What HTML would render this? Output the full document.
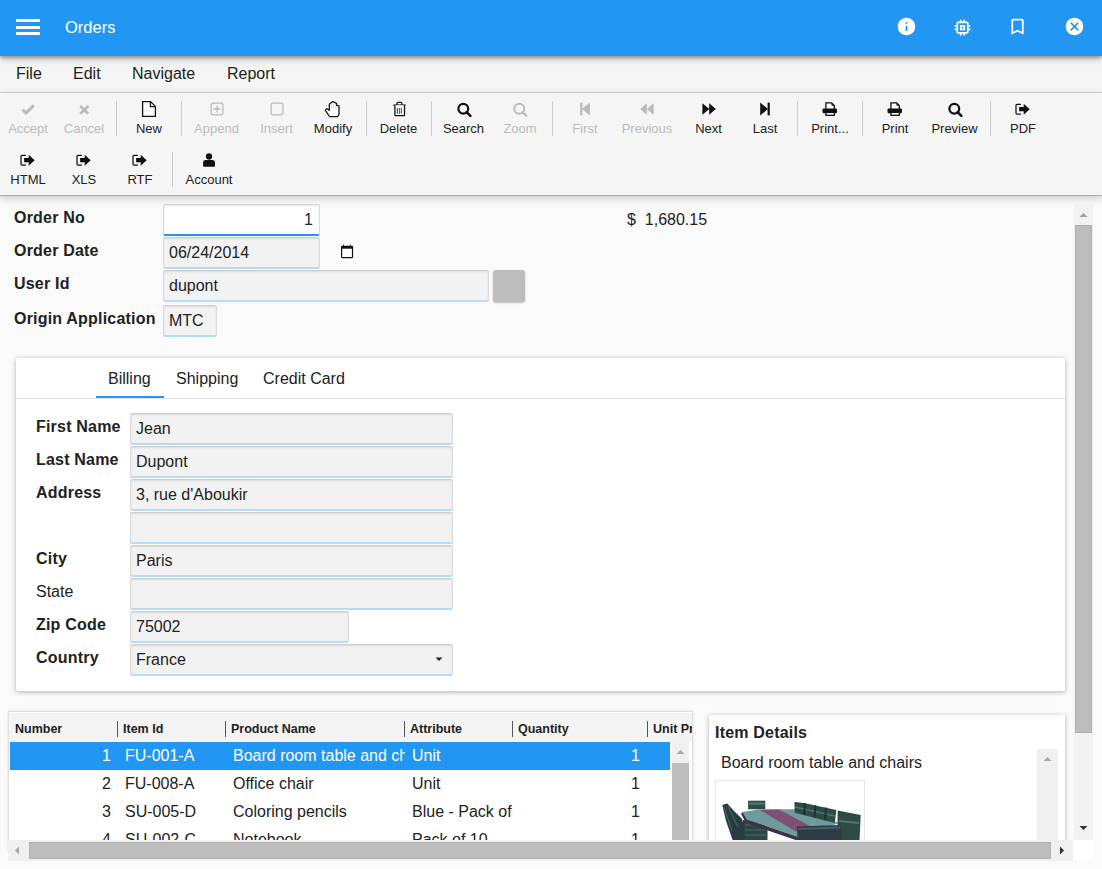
<!DOCTYPE html>
<html><head><meta charset="utf-8">
<style>
*{box-sizing:border-box;margin:0;padding:0}
html,body{width:1102px;height:869px;overflow:hidden;background:#fafafa;font-family:"Liberation Sans",sans-serif;color:#222;font-size:16px}
.abs{position:absolute}
#hdr{position:absolute;left:0;top:0;width:1102px;height:56px;background:#2196f3;z-index:5;box-shadow:0 2px 3px rgba(0,0,0,.28),0 3px 8px rgba(0,0,0,.2)}
#hdr .ttl{position:absolute;left:65px;top:17.3px;font-size:16.5px;color:#fff;line-height:20px}
#menu{position:absolute;left:0;top:56px;width:1102px;height:37px;background:#f5f5f5;border-bottom:1px solid #cfcfcf}
#menu span{position:absolute;top:9px;line-height:18px;font-size:16px;color:#222}
#tb{position:absolute;left:0;top:93px;width:1102px;height:102px;background:#f5f5f5;z-index:4;box-shadow:0 1px 1px rgba(0,0,0,.2),0 3px 9px rgba(0,0,0,.2)}
.btn{position:absolute;width:80px;margin-left:-40px;text-align:center;font-size:13px;line-height:15px;color:#222}
.btn.dis{color:#bcbcbc}
.btn svg{position:absolute;left:50%;margin-left:-9px;width:18px;height:18px}
.btn .lb{position:absolute;left:0;width:80px;white-space:nowrap}
.sep{position:absolute;width:1px;background:#cdcdcd}
.lbl{position:absolute;font-weight:bold;font-size:16px;line-height:18px;color:#222;white-space:nowrap;letter-spacing:0.2px}
.lbln{position:absolute;font-size:16px;line-height:18px;color:#222;white-space:nowrap}
.inp{position:absolute;height:32px;background:#f2f2f2;border:1px solid #dadada;border-top-color:#cdcdcd;box-shadow:inset 0 1px 2px rgba(0,0,0,.10);border-bottom:2px solid #b6dcfa;border-radius:2px;font-size:16px;line-height:18px;padding:6px 0 0 5px;color:#222;white-space:nowrap;overflow:hidden}
.th{position:absolute;top:722px;font-weight:bold;font-size:12.5px;line-height:15px;color:#222;white-space:nowrap}
.row{position:absolute;left:0;width:660px;height:28px;font-size:16px;color:#222}
.row span{position:absolute;top:5px;line-height:18px;white-space:nowrap}
</style></head><body>

<div id="hdr">
  <div class="abs" style="left:16px;top:19px;width:24px;height:3px;background:#fff"></div>
  <div class="abs" style="left:16px;top:25.5px;width:24px;height:3px;background:#fff"></div>
  <div class="abs" style="left:16px;top:32px;width:24px;height:3px;background:#fff"></div>
  <div class="ttl">Orders</div>
  <svg class="abs" style="left:895.5px;top:16.3px" width="21" height="21" viewBox="0 0 24 24"><path fill="#fff" d="M12 2C6.48 2 2 6.48 2 12s4.48 10 10 10 10-4.48 10-10S17.52 2 12 2zm1 15h-2v-6h2v6zm0-8h-2V7h2v2z"/></svg>
  <svg class="abs" style="left:951.5px;top:16.5px" width="21" height="21" viewBox="0 0 24 24"><path fill="#fff" d="M15 9H9v6h6V9zm-2 4h-2v-2h2v2zm8-2V9h-2V7c0-1.1-.9-2-2-2h-2V3h-2v2h-2V3H9v2H7c-1.1 0-2 .9-2 2v2H3v2h2v2H3v2h2v2c0 1.1.9 2 2 2h2v2h2v-2h2v2h2v-2h2c1.1 0 2-.9 2-2v-2h2v-2h-2v-2h2zm-4 6H7V7h10v10z"/></svg>
  <svg class="abs" style="left:1007.4px;top:16.4px" width="21" height="21" viewBox="0 0 24 24"><path fill="#fff" d="M17 3H7c-1.1 0-1.99.9-1.99 2L5 21l7-3 7 3V5c0-1.1-.9-2-2-2zm0 15l-5-2.18L7 18V5h10v13z"/></svg>
  <svg class="abs" style="left:1063.5px;top:16.3px" width="21" height="21" viewBox="0 0 24 24"><path fill="#fff" d="M12 2C6.47 2 2 6.47 2 12s4.47 10 10 10 10-4.47 10-10S17.53 2 12 2zm5 13.59L15.59 17 12 13.41 8.41 17 7 15.59 10.59 12 7 8.41 8.41 7 12 10.59 15.59 7 17 8.41 13.41 12 17 15.59z"/></svg>

</div>

<div id="menu">
  <span style="left:16px">File</span>
  <span style="left:73px">Edit</span>
  <span style="left:132px">Navigate</span>
  <span style="left:227px">Report</span>
</div>

<div id="tb"></div>
<div id="tbi" style="position:absolute;left:0;top:0;z-index:6">
<div class="btn dis" style="left:28px;top:100px"><svg viewBox="0 0 18 18" style="top:0"><polyline points="3.6,9.6 7,13 14.8,5.4" fill="none" stroke="#bababa" stroke-width="2.9"/></svg><div class="lb" style="top:21px">Accept</div></div>
<div class="btn dis" style="left:84px;top:100px"><svg viewBox="0 0 18 18" style="top:0"><path d="M5.3,6.1 L13.3,13.7 M13.3,6.1 L5.3,13.7" stroke="#bababa" stroke-width="2.8"/></svg><div class="lb" style="top:21px">Cancel</div></div>
<div class="sep" style="left:116.0px;top:101px;height:35px"></div>
<div class="btn" style="left:149px;top:100px"><svg viewBox="0 0 18 18" style="top:0"><path d="M2.6,1.6 H10.6 L15.4,6.4 V16.4 H2.6 Z M10.4,1.6 V6.6 H15.4" fill="#fff" stroke="#111" stroke-width="1.3" stroke-linejoin="miter"/></svg><div class="lb" style="top:21px">New</div></div>
<div class="sep" style="left:181.0px;top:101px;height:35px"></div>
<div class="btn dis" style="left:216.5px;top:100px"><svg viewBox="0 0 18 18" style="top:0"><rect x="3.1" y="3.1" width="11.8" height="11.8" rx="1.8" fill="none" stroke="#bababa" stroke-width="1.3"/><path d="M9,5.5 V12.5 M5.5,9 H12.5" stroke="#bababa" stroke-width="1.3"/></svg><div class="lb" style="top:21px">Append</div></div>
<div class="btn dis" style="left:276.5px;top:100px"><svg viewBox="0 0 18 18" style="top:0"><rect x="3.1" y="3.1" width="11.8" height="11.8" rx="1.8" fill="none" stroke="#bababa" stroke-width="1.3"/></svg><div class="lb" style="top:21px">Insert</div></div>
<div class="btn" style="left:333px;top:100px"><svg viewBox="0 0 18 18" style="top:0"><path d="M5.3,10.3 V4.2 L8.8,1.6 L12.6,3.4 V5.3 L15,5.9 V14.3 L13.7,16.5 H5.5 L1.4,10.4 C1.7,9.1 2.7,8.5 3.6,8.9 L5.3,10.3 Z" fill="#fff" stroke="#111" stroke-width="1.25" stroke-linejoin="round"/><path d="M7.4,4.4 V8.9 M9.3,3.6 V8.9 M11.2,4.2 V8.9 M13.1,6.2 V8.9" stroke="#c8c8c8" stroke-width="0.7"/></svg><div class="lb" style="top:21px">Modify</div></div>
<div class="sep" style="left:366.0px;top:101px;height:35px"></div>
<div class="btn" style="left:398.5px;top:100px"><svg viewBox="0 0 18 18" style="top:0"><path d="M3.4,5.1 H15.6" stroke="#111" stroke-width="1.3"/><path d="M6.9,5 V3.6 C6.9,2.6 7.5,2.3 8.2,2.3 H10.6 C11.3,2.3 11.9,2.6 11.9,3.6 V5" fill="none" stroke="#111" stroke-width="1.2"/><path d="M4.9,5.2 V15 C4.9,15.4 5.2,15.6 5.6,15.6 H13.8 C14.2,15.6 14.5,15.4 14.5,15 V5.2" fill="#fff" stroke="#111" stroke-width="1.3"/><path d="M7.3,7.8 V13.8 M9.3,7.8 V13.8 M11.3,7.8 V13.8" stroke="#111" stroke-width="0.8"/></svg><div class="lb" style="top:21px">Delete</div></div>
<div class="sep" style="left:431.0px;top:101px;height:35px"></div>
<div class="btn" style="left:463.5px;top:100px"><svg viewBox="0 0 18 18" style="top:0"><circle cx="8.3" cy="8.7" r="4.9" fill="none" stroke="#111" stroke-width="2.2"/><path d="M11.6,12.1 L15.4,15.9" stroke="#111" stroke-width="2.6" stroke-linecap="round"/></svg><div class="lb" style="top:21px">Search</div></div>
<div class="btn dis" style="left:520px;top:100px"><svg viewBox="0 0 18 18" style="top:0"><circle cx="8.3" cy="8.7" r="5" fill="none" stroke="#bababa" stroke-width="1.9"/><path d="M11.7,12.2 L15.3,15.8" stroke="#bababa" stroke-width="2.3" stroke-linecap="round"/></svg><div class="lb" style="top:21px">Zoom</div></div>
<div class="sep" style="left:552.0px;top:101px;height:35px"></div>
<div class="btn dis" style="left:585px;top:100px"><svg viewBox="0 0 18 18" style="top:0"><rect x="4.2" y="2.6" width="2.2" height="12.8" fill="#bababa"/><polygon points="6,9 13.8,2.6 13.8,15.4" fill="#bababa"/></svg><div class="lb" style="top:21px">First</div></div>
<div class="btn dis" style="left:647px;top:100px"><svg viewBox="0 0 18 18" style="top:0"><polygon points="2.2,9 8.8,3.2 8.8,14.8" fill="#bababa"/><polygon points="8.6,9 15.6,3.2 15.6,14.8" fill="#bababa"/></svg><div class="lb" style="top:21px">Previous</div></div>
<div class="btn" style="left:708.5px;top:100px"><svg viewBox="0 0 18 18" style="top:0"><polygon points="15.8,9 9.2,3.2 9.2,14.8" fill="#111"/><polygon points="9.4,9 2.4,3.2 2.4,14.8" fill="#111"/></svg><div class="lb" style="top:21px">Next</div></div>
<div class="btn" style="left:765px;top:100px"><svg viewBox="0 0 18 18" style="top:0"><rect x="11.6" y="2.6" width="2.2" height="12.8" fill="#111"/><polygon points="12,9 4.2,2.6 4.2,15.4" fill="#111"/></svg><div class="lb" style="top:21px">Last</div></div>
<div class="sep" style="left:797.0px;top:101px;height:35px"></div>
<div class="btn" style="left:830px;top:100px"><svg viewBox="0 0 18 18" style="top:0"><path d="M4.9,8.9 V2.9 H10.6 L13.3,5.6 V8.9" fill="#fff" stroke="#111" stroke-width="1.3"/><polygon points="10.4,2.9 13.3,5.8 10.6,5.8" fill="#111"/><rect x="1.5" y="8.6" width="14.5" height="4.6" rx="1.1" fill="#111"/><rect x="4.9" y="12.4" width="8.4" height="2.9" fill="#fff" stroke="#111" stroke-width="1.3"/></svg><div class="lb" style="top:21px">Print...</div></div>
<div class="sep" style="left:862.0px;top:101px;height:35px"></div>
<div class="btn" style="left:895px;top:100px"><svg viewBox="0 0 18 18" style="top:0"><path d="M4.9,8.9 V2.9 H10.6 L13.3,5.6 V8.9" fill="#fff" stroke="#111" stroke-width="1.3"/><polygon points="10.4,2.9 13.3,5.8 10.6,5.8" fill="#111"/><rect x="1.5" y="8.6" width="14.5" height="4.6" rx="1.1" fill="#111"/><rect x="4.9" y="12.4" width="8.4" height="2.9" fill="#fff" stroke="#111" stroke-width="1.3"/></svg><div class="lb" style="top:21px">Print</div></div>
<div class="btn" style="left:954.5px;top:100px"><svg viewBox="0 0 18 18" style="top:0"><circle cx="8.3" cy="8.7" r="4.9" fill="none" stroke="#111" stroke-width="2.2"/><path d="M11.6,12.1 L15.4,15.9" stroke="#111" stroke-width="2.6" stroke-linecap="round"/></svg><div class="lb" style="top:21px">Preview</div></div>
<div class="sep" style="left:990.0px;top:101px;height:35px"></div>
<div class="btn" style="left:1023px;top:100px"><svg viewBox="0 0 18 18" style="top:0"><path d="M6.9,4.4 H3.1 C2.4,4.4 2,4.8 2,5.6 V12.9 C2,13.7 2.4,14.1 3.1,14.1 H6.9" fill="none" stroke="#111" stroke-width="1.25"/><path d="M5.1,7.1 H9.7 V3.8 L15.7,9.3 L9.7,14.7 V11.2 H5.1 Z" fill="#111"/></svg><div class="lb" style="top:21px">PDF</div></div>
<div class="btn" style="left:28px;top:151px"><svg viewBox="0 0 18 18" style="top:0"><path d="M6.9,4.4 H3.1 C2.4,4.4 2,4.8 2,5.6 V12.9 C2,13.7 2.4,14.1 3.1,14.1 H6.9" fill="none" stroke="#111" stroke-width="1.25"/><path d="M5.1,7.1 H9.7 V3.8 L15.7,9.3 L9.7,14.7 V11.2 H5.1 Z" fill="#111"/></svg><div class="lb" style="top:21px">HTML</div></div>
<div class="btn" style="left:84px;top:151px"><svg viewBox="0 0 18 18" style="top:0"><path d="M6.9,4.4 H3.1 C2.4,4.4 2,4.8 2,5.6 V12.9 C2,13.7 2.4,14.1 3.1,14.1 H6.9" fill="none" stroke="#111" stroke-width="1.25"/><path d="M5.1,7.1 H9.7 V3.8 L15.7,9.3 L9.7,14.7 V11.2 H5.1 Z" fill="#111"/></svg><div class="lb" style="top:21px">XLS</div></div>
<div class="btn" style="left:140px;top:151px"><svg viewBox="0 0 18 18" style="top:0"><path d="M6.9,4.4 H3.1 C2.4,4.4 2,4.8 2,5.6 V12.9 C2,13.7 2.4,14.1 3.1,14.1 H6.9" fill="none" stroke="#111" stroke-width="1.25"/><path d="M5.1,7.1 H9.7 V3.8 L15.7,9.3 L9.7,14.7 V11.2 H5.1 Z" fill="#111"/></svg><div class="lb" style="top:21px">RTF</div></div>
<div class="sep" style="left:172.0px;top:152px;height:35px"></div>
<div class="btn" style="left:209px;top:151px"><svg viewBox="0 0 18 18" style="top:0"><circle cx="9" cy="5.5" r="3.15" fill="#111"/><path d="M3.1,15.7 V11.6 C3.1,9.9 4.2,8.9 5.6,8.9 H12.4 C13.8,8.9 15,9.9 15,11.6 V15 C15,15.4 14.7,15.7 14.3,15.7 H3.8 C3.4,15.7 3.1,15.4 3.1,15 Z" fill="#111"/></svg><div class="lb" style="top:21px">Account</div></div>

</div>

<div id="content">
<!-- form header -->
<div class="lbl" style="left:14px;top:209px">Order No</div>
<div class="lbl" style="left:14px;top:242px">Order Date</div>
<div class="lbl" style="left:14px;top:275px">User Id</div>
<div class="lbl" style="left:14px;top:310px">Origin Application</div>

<div class="inp" style="left:163px;top:204px;width:157px;height:32px;background:#fff;border-color:#d9d9d9;border-bottom:2px solid #2196f3;text-align:right;padding-right:6px">1</div>
<div class="inp" style="left:163px;top:237px;width:157px">06/24/2014</div>
<svg class="abs" style="left:338px;top:243px" width="18" height="18" viewBox="0 0 18 18"><rect x="3.6" y="3.4" width="10.9" height="11.3" rx="1" fill="#fff" stroke="#111" stroke-width="1.2"/><rect x="3.2" y="3" width="11.7" height="2.7" fill="#111"/><rect x="4.9" y="1.7" width="1" height="1.5" fill="#111"/><rect x="11.9" y="1.7" width="1" height="1.5" fill="#111"/></svg>
<div class="inp" style="left:163px;top:270px;width:326px">dupont</div>
<div class="abs" style="left:493px;top:270px;width:32px;height:32px;background:#bdbdbd;border-radius:3px;box-shadow:0 1px 2px rgba(0,0,0,.25)"></div>
<div class="inp" style="left:163px;top:305px;width:54px">MTC</div>

<div class="lbln" style="left:627px;top:211px">$&nbsp; 1,680.15</div>

<!-- tab panel -->
<div class="abs" style="left:16px;top:358px;width:1049px;height:333px;background:#fff;border-radius:2px;box-shadow:0 1px 5px rgba(0,0,0,.3)"></div>
<div class="abs" style="left:16px;top:398px;width:1049px;height:1px;background:#e3e3e3"></div>
<div class="abs" style="left:96px;top:396px;width:68px;height:2px;background:#2196f3"></div>
<div class="lbln" style="left:108px;top:370px">Billing</div>
<div class="lbln" style="left:176px;top:370px">Shipping</div>
<div class="lbln" style="left:263px;top:370px">Credit Card</div>

<div class="lbl" style="left:36px;top:418px">First Name</div>
<div class="lbl" style="left:36px;top:451px">Last Name</div>
<div class="lbl" style="left:36px;top:484px">Address</div>
<div class="lbl" style="left:36px;top:550px">City</div>
<div class="lbln" style="left:36px;top:583px">State</div>
<div class="lbl" style="left:36px;top:616px">Zip Code</div>
<div class="lbl" style="left:36px;top:649px">Country</div>

<div class="inp" style="left:130px;top:413px;width:323px">Jean</div>
<div class="inp" style="left:130px;top:446px;width:323px">Dupont</div>
<div class="inp" style="left:130px;top:479px;width:323px">3, rue d'Aboukir</div>
<div class="inp" style="left:130px;top:512px;width:323px"></div>
<div class="inp" style="left:130px;top:545px;width:323px">Paris</div>
<div class="inp" style="left:130px;top:578px;width:323px"></div>
<div class="inp" style="left:130px;top:611px;width:219px">75002</div>
<div class="inp" style="left:130px;top:644px;width:323px">France</div>
<svg class="abs" style="left:434px;top:655px" width="10" height="8" viewBox="0 0 10 8"><polygon points="1.5,2.5 8.5,2.5 5,6" fill="#222"/></svg>

<!-- table -->
<div class="abs" style="left:8px;top:711px;width:685px;height:140px;background:#fff;border:1px solid #e0e0e0;box-shadow:0 0 2px rgba(0,0,0,.12)"></div>
<div class="abs" style="left:9px;top:712px;width:683px;height:30px;background:#f4f4f4;border-top:1px solid #fff;border-left:1px solid #fafafa"></div>
<div class="abs th" style="left:15px">Number</div>
<div class="abs th" style="left:123px">Item Id</div>
<div class="abs th" style="left:231px">Product Name</div>
<div class="abs th" style="left:410px">Attribute</div>
<div class="abs th" style="left:518px">Quantity</div>
<div class="abs th" style="left:653px;width:39px;overflow:hidden">Unit Price</div>
<div class="sep" style="left:117px;top:721px;height:16px;background:#555"></div>
<div class="sep" style="left:225px;top:721px;height:16px;background:#555"></div>
<div class="sep" style="left:404px;top:721px;height:16px;background:#555"></div>
<div class="sep" style="left:512px;top:721px;height:16px;background:#555"></div>
<div class="sep" style="left:647px;top:721px;height:16px;background:#555"></div>

<div class="abs" style="left:10px;top:742px;width:660px;height:98px;overflow:hidden">
  <div class="abs" style="left:0;top:0;width:660px;height:28px;background:#2196f3"></div>
  <div class="row" style="top:0;color:#fff"><span style="right:559px">1</span><span style="left:115px">FU-001-A</span><span style="left:223px;width:172px;overflow:hidden">Board room table and chairs</span><span style="left:402px">Unit</span><span style="right:30px">1</span></div>
  <div class="row" style="top:28px"><span style="right:559px">2</span><span style="left:115px">FU-008-A</span><span style="left:223px">Office chair</span><span style="left:402px">Unit</span><span style="right:30px">1</span></div>
  <div class="row" style="top:56px"><span style="right:559px">3</span><span style="left:115px">SU-005-D</span><span style="left:223px">Coloring pencils</span><span style="left:402px;width:101px;overflow:hidden">Blue - Pack of 12</span><span style="right:30px">1</span></div>
  <div class="row" style="top:84px"><span style="right:559px">4</span><span style="left:115px">SU-002-C</span><span style="left:223px">Notebook</span><span style="left:402px">Pack of 10</span><span style="right:30px">1</span></div>
</div>
<!-- table vscroll -->
<div class="abs" style="left:672px;top:742px;width:17px;height:98px;background:#f0f0f0"></div>
<svg class="abs" style="left:675px;top:748px" width="11" height="8" viewBox="0 0 11 8"><polygon points="1.5,6 9.5,6 5.5,2" fill="#a8a8a8"/></svg>
<div class="abs" style="left:672px;top:763px;width:17px;height:77px;background:#bdbdbd"></div>

<!-- item details -->
<div class="abs" style="left:709px;top:715px;width:356px;height:140px;background:#fff;border-radius:2px;box-shadow:0 1px 5px rgba(0,0,0,.3)"></div>
<div class="lbl" style="left:715px;top:724px">Item Details</div>
<div class="lbln" style="left:721px;top:754px">Board room table and chairs</div>
<div class="abs" style="left:1037px;top:749px;width:21px;height:91px;background:#f0f0f0"></div>
<svg class="abs" style="left:1042px;top:755px" width="11" height="8" viewBox="0 0 11 8"><polygon points="1.5,6 9.5,6 5.5,2" fill="#a8a8a8"/></svg>
<div class="abs" style="left:715px;top:780px;width:150px;height:70px;background:#fff;border:1px solid #e6e6e6;overflow:hidden">
<svg class="abs" style="left:0;top:0" width="150" height="70" viewBox="0 0 150 70">
 <polygon points="27,39 40,40 51.5,46 51.5,60 27,60" fill="#2b4543"/>
 <path d="M29,44 H49 M29,49 H50 M29,54 H50" stroke="#4c6b68" stroke-width="1"/>
 <polygon points="6.3,24 11.3,22.5 18,30 25.7,37.6 27.8,43.3 28.5,60 17,60 10,40" fill="#283c40"/>
 <path d="M8,26 L16,50 M12,25 L22,46" stroke="#4a6468" stroke-width="1.1"/>
 <rect x="32.1" y="19.7" width="17.2" height="8.6" fill="#2e4c49"/>
 <rect x="33" y="21.5" width="15.5" height="2.2" fill="#55786f"/>
 <polygon points="26.4,31.1 44.3,28.3 78.7,28.3 123.2,41.9 83,56.2 31.4,39" fill="#6f9b9d"/>
 <polygon points="44,29 63,28.6 94,45 80,50.5" fill="#7e5074"/>
 <polygon points="26.4,31.1 31.4,39 83,56.2 84,60.5 30,42 25,33" fill="#3c3446"/>
 <polygon points="78.4,21 88,22 120.3,29 118.9,41.9 78.7,31.8" fill="#2e4a47"/>
 <path d="M79,26 L119,35" stroke="#4f716d" stroke-width="1.4"/>
 <path d="M89,22 L88,34 M99.5,24.2 L98.5,36.5 M110,26.5 L109,39" stroke="#1a2a29" stroke-width="1.6"/>
 <polygon points="121.7,29.5 144.7,34 143.5,60 126,60 121.5,44" fill="#2e4a47"/>
 <path d="M123,40 L143,42" stroke="#53756f" stroke-width="2"/>
 <polygon points="80.9,45.5 124.6,44 126.7,60 81.6,60" fill="#2c3b44"/>
 <path d="M82,48 L124,46.5" stroke="#4a5a66" stroke-width="2"/>
</svg>
</div>

<!-- page vscroll -->
<div class="abs" style="left:1074px;top:205px;width:19px;height:635px;background:#f2f2f2"></div>
<svg class="abs" style="left:1078px;top:211px" width="11" height="8" viewBox="0 0 11 8"><polygon points="1.5,6 9.5,6 5.5,2" fill="#a0a0a0"/></svg>
<div class="abs" style="left:1075px;top:225px;width:17px;height:508px;background:#bdbdbd;border:1px solid #b0b0b0"></div>
<svg class="abs" style="left:1078px;top:824px" width="11" height="8" viewBox="0 0 11 8"><polygon points="1.5,2 9.5,2 5.5,6" fill="#333"/></svg>
<!-- page hscroll -->
<div class="abs" style="left:8px;top:840px;width:1065px;height:21px;background:#f0f0f0"></div>
<svg class="abs" style="left:13px;top:845px" width="8" height="11" viewBox="0 0 8 11"><polygon points="2,5.5 6,1.5 6,9.5" fill="#a8a8a8"/></svg>
<div class="abs" style="left:29px;top:842px;width:1022px;height:17px;background:#bdbdbd;border:1px solid #b0b0b0"></div>
<svg class="abs" style="left:1058px;top:845px" width="8" height="11" viewBox="0 0 8 11"><polygon points="2,1.5 6,5.5 2,9.5" fill="#333"/></svg>
<div class="abs" style="left:1073px;top:840px;width:21px;height:20px;background:#fff"></div>

</div>

</body></html>
